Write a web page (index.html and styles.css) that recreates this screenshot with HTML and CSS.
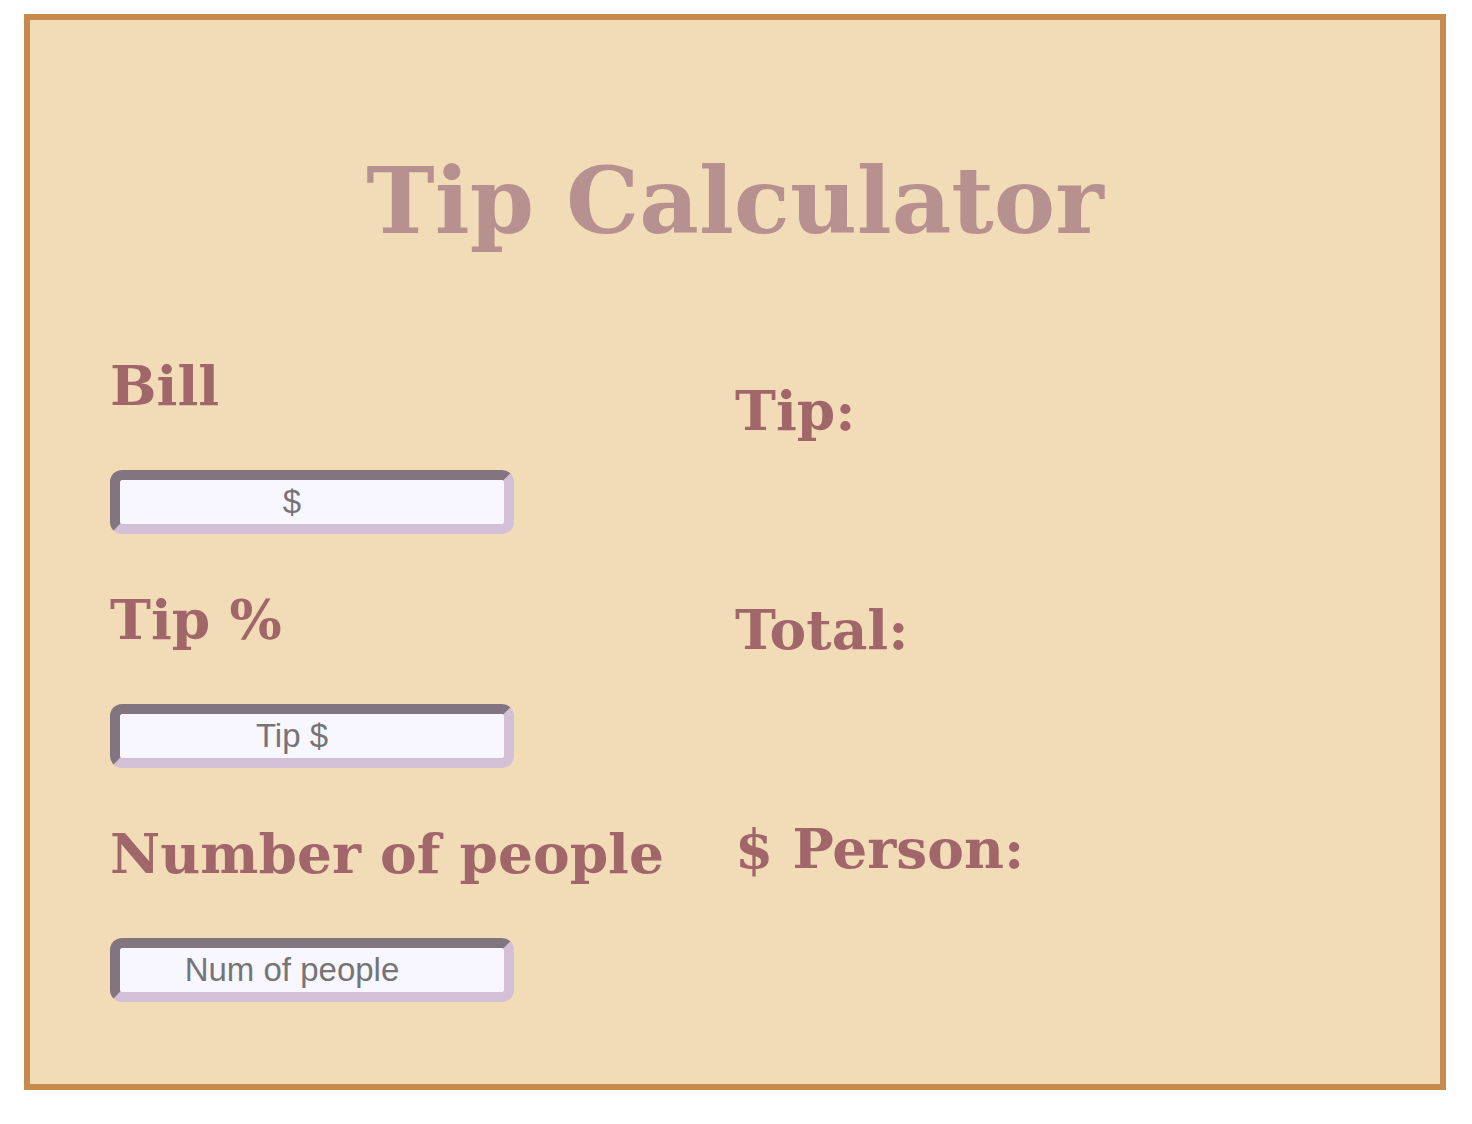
FILE: index.html
```html
<!DOCTYPE html>
<html lang="en">
<head>
<meta charset="utf-8">
<title>Tip Calculator</title>
<link rel="stylesheet" href="styles.css">
</head>
<body>
<main class="calculator">
  <h1 class="title">Tip Calculator</h1>
  <div class="columns">
    <section class="inputs">
      <div class="field">
        <label class="label" for="bill">Bill</label>
        <input class="entry" id="bill" type="text" placeholder="$">
      </div>
      <div class="field">
        <label class="label" for="tip">Tip %</label>
        <input class="entry" id="tip" type="text" placeholder="Tip $">
      </div>
      <div class="field">
        <label class="label" for="people">Number of people</label>
        <input class="entry" id="people" type="text" placeholder="Num of people">
      </div>
    </section>
    <section class="results">
      <h2 class="result">Tip:</h2>
      <h2 class="result">Total:</h2>
      <h2 class="result">$ Person:</h2>
    </section>
  </div>
</main>
</body>
</html>
```

FILE: styles.css
```css
html, body {
  margin: 0;
  padding: 0;
  background: #ffffff;
}

body {
  padding: 14px 26px 0 24px;
}

.calculator {
  box-sizing: border-box;
  width: 1422px;
  height: 1076px;
  border: 6px solid #c68a4c;
  background: #f2dcb7;
  padding: 121px 80px 0 80px;
  font-family: "DejaVu Serif", Georgia, serif;
}

.title {
  margin: 0;
  text-align: center;
  font-size: 92px;
  line-height: 120px;
  font-weight: bold;
  color: #b79090;
}

.columns {
  display: grid;
  grid-template-columns: 625px 625px;
  margin-top: 85px;
}

.inputs {
  display: flex;
  flex-direction: column;
}

.field {
  display: flex;
  flex-direction: column;
  align-items: flex-start;
  margin-bottom: 46px;
}

.label {
  display: block;
  font-size: 55px;
  line-height: 80px;
  font-weight: bold;
  color: #a0666a;
  white-space: nowrap;
}

.entry {
  box-sizing: border-box;
  width: 404px;
  height: 64px;
  margin-top: 44px;
  border-width: 10px;
  border-style: solid;
  border-color: #827580 #d4c0d6 #d4c0d6 #827580;
  border-radius: 12px;
  background: #f8f6fe;
  padding: 0 40px 0 0;
  font-family: "Liberation Sans", Arial, sans-serif;
  font-size: 33px;
  text-align: center;
  color: #333333;
  outline: none;
}

.entry::placeholder {
  color: #757575;
  opacity: 1;
}

.results {
  display: flex;
  flex-direction: column;
  padding-top: 25px;
}

.result {
  margin: 0 0 139px 0;
  font-size: 55px;
  line-height: 80px;
  font-weight: bold;
  color: #a0666a;
  white-space: nowrap;
}
```
